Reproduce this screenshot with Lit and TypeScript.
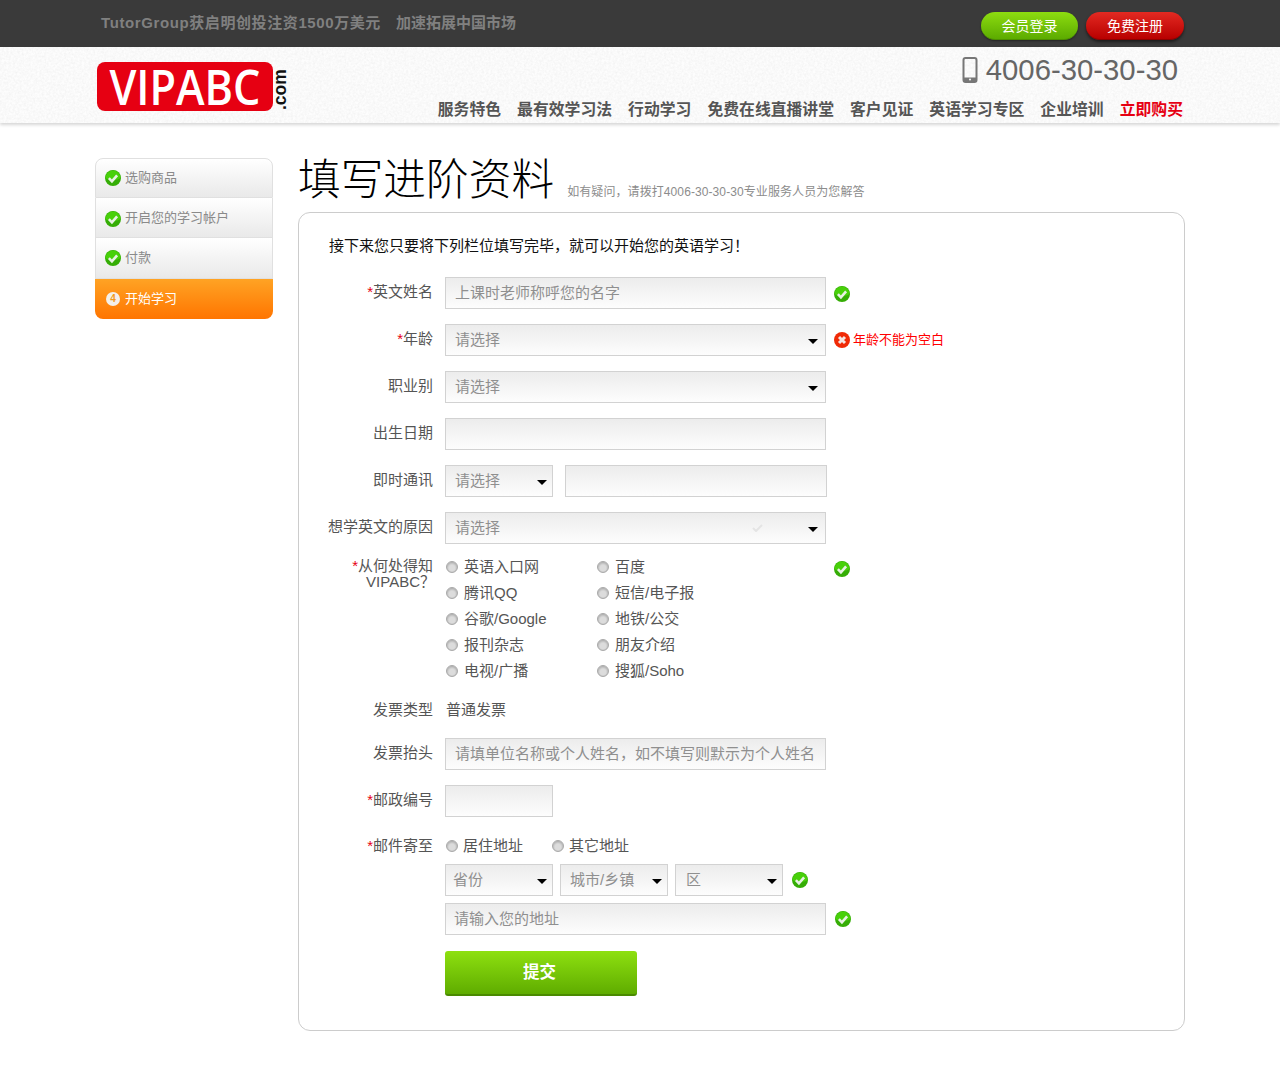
import { LitElement, html, css, svg, unsafeCSS } from "lit";
import { customElement } from "lit/decorators.js";

const FONT = unsafeCSS(`"Liberation Sans", "Noto Sans CJK SC", sans-serif`);
const NOISE = unsafeCSS(
  `url("data:image/svg+xml,%3Csvg xmlns='http://www.w3.org/2000/svg' width='300' height='120'%3E%3Cfilter id='n'%3E%3CfeTurbulence type='fractalNoise' baseFrequency='.45' numOctaves='3' stitchTiles='stitch'/%3E%3CfeColorMatrix values='0 0 0 0 .55 0 0 0 0 .55 0 0 0 0 .55 0 0 0 .28 -.08'/%3E%3C/filter%3E%3Crect width='300' height='120' filter='url(%23n)'/%3E%3C/svg%3E")`
);

const check = () => html`<svg class="ico" viewBox="0 0 16 16" aria-hidden="true">
  <circle cx="8" cy="8" r="8" fill="#35ad06"/>
  <path d="M8 .4a7.6 7.6 0 0 1 7.6 7.6c-3 2.6-12.2 2.6-15.2 0A7.6 7.6 0 0 1 8 .4z" fill="#48d00a"/>
  <path d="M3.9 8.2l3 3.1 5.2-6" fill="none" stroke="#e8f1e4" stroke-width="2.6"/>
</svg>`;

const cross = html`<svg class="ico" viewBox="0 0 16 16" aria-hidden="true">
  <circle cx="8" cy="8" r="8" fill="#f02a06"/>
  <path d="M5 5l6 6M11 5l-6 6" fill="none" stroke="#f5e6e2" stroke-width="3"/>
</svg>`;

const radio = (label: string) => html`<span class="radio"><i class="dot"></i><span>${label}</span></span>`;

@customElement("app-root")
export class AppRoot extends LitElement {
  static styles = css`
    :host { display: block; font-family: ${FONT}; background: #fff; height: 1083px; overflow: hidden; }
    * { box-sizing: border-box; }
    .wrap { width: 1090px; margin-left: 95px; }
    .top { height: 47px; background: #3a3a3a; }
    .top .wrap { display: flex; justify-content: space-between; height: 47px; }
    .news { display: flex; gap: 15px; padding: 14px 0 0 6px; font-size: 15px; line-height: 18px; font-weight: 700; color: #808080; }
    .news span:first-child { letter-spacing: .6px; }
    .btns { display: flex; gap: 8px; padding-top: 12px; margin-right: 1px; }
    .pill { height: 28px; width: 97px; border-radius: 14px; color: #fff; font-size: 14px; line-height: 28px; text-align: center; }
    .pill.g { background: linear-gradient(#8ddc10, #5cab00); border-bottom: 1px solid #4c8f00; box-shadow: 0 1px 2px rgba(0,0,0,.4); }
    .pill.r { width: 98px; background: linear-gradient(#e32a22, #b80000); border-bottom: 1px solid #8e0000; box-shadow: 0 2px 3px rgba(0,0,0,.5); }
    .head { position: relative; height: 76px; background-color: #fdfdfd; background-image: ${NOISE}; box-shadow: 0 2px 3px rgba(0,0,0,.16); }
    .head .wrap { display: flex; justify-content: space-between; height: 76px; }
    .logo { display: flex; align-items: flex-start; padding: 15px 0 0 2px; gap: 1px; }
    .mark { display: flex; justify-content: center; align-items: center; width: 176px; height: 49px; border-radius: 8px; background: #e60012; color: #fff; }
    .mark span { font-family: "Open Sans", sans-serif; font-size: 48px; line-height: 47px; font-weight: 600; transform: scaleX(.9); }
    .com { writing-mode: vertical-rl; transform: rotate(180deg); font-size: 17.5px; line-height: 12px; height: 44px; font-weight: 700; color: #111; text-align: left; margin-top: 4px; }
    .hr { display: flex; flex-direction: column; align-items: flex-end; }
    .phone { display: flex; align-items: center; gap: 7px; height: 44px; padding: 2px 7px 0 0; font-size: 29.3px; color: #666; }
    .phone svg { width: 17px; height: 26px; }
    .nav { display: flex; gap: 16px; margin: 9px 2px 0 0; font-size: 15.83px; line-height: 20px; font-weight: 700; color: #555; }
    .nav .buy { color: #e60012; }

    .body { display: flex; gap: 25px; padding-top: 31px; }
    .side { width: 178px; align-self: flex-start; margin-top: 4px; }
    .step { height: 40px; display: flex; align-items: center; gap: 4px; padding-left: 9px; font-size: 13px; color: #8a8a8a;
      background: linear-gradient(#fff, #e9e9e9); border: 1px solid #e0e0e0; border-top: 0; }
    .step span:last-child { line-height: 16px; margin-bottom: 1px; }
    .step:first-child { border-top: 1px solid #e0e0e0; border-radius: 8px 8px 0 0; }
    .step:nth-child(2) { padding-top: 2px; }
    .step:nth-child(3) { height: 41px; }
    .step.on { background: linear-gradient(#ffa324, #ff7500); color: #fff; border: 0; border-radius: 0 0 8px 8px; padding-left: 10px; }
    .num { width: 14px; height: 14px; border-radius: 50%; background: #f4f0ea; color: #f39a1c; font-size: 10px; line-height: 14px; font-weight: 700; text-align: center; margin: 0 1px; }

    .main { width: 887px; }
    .title { display: flex; align-items: flex-end; gap: 13px; height: 51px; }
    .title h1 { margin: 0; font-size: 42.7px; line-height: 50px; font-weight: 300; color: #000; }
    .title p { margin: 0 0 5px; font-size: 12px; letter-spacing: .09px; line-height: 16px; color: #8c8c8c; }
    .card { margin-top: 7px; height: 819px; border: 1px solid #ccc; border-radius: 12px; padding: 23px 0 0 0; }
    .intro { font-size: 15px; line-height: 20px; color: #111; margin: 0 0 21px 30px; }
    .row { display: flex; align-items: center; height: 32px; margin-bottom: 15px; }
    .lab { width: 134px; margin-right: 12px; flex: none; text-align: right; font-size: 15px; line-height: 16px; color: #555; padding-bottom: 3px; }
    .lab b { color: #e60012; font-weight: 400; }
    .field { position: relative; height: 32px; width: 381px; flex: none; padding-left: 9px; font-size: 15px; line-height: 30px; color: #8f8f8f;
      background: linear-gradient(#ececec, #fdfdfd); border: 1px solid #d2d2d2; white-space: nowrap; overflow: hidden; }
    .field.arrow::after { content: ""; position: absolute; right: 7px; top: 14px; border: 5px solid transparent; border-top: 5px solid #000; border-bottom: 0; }
    .w108 { width: 108px; }
    .field.w108.arrow::after { right: 5px; }
    .w262 { width: 262px; margin-left: 12px; }
    .ico { width: 16px; height: 16px; flex: none; }
    .row > .ico { margin: 2px 0 0 8px; }
    .err { display: flex; align-items: center; gap: 3px; margin-left: 8px; font-size: 13px; color: #f00; }
    .err span { line-height: 16px; margin-bottom: 1px; }
    .faint { position: absolute; left: 306px; top: 11px; width: 11px; height: 8px; }

    .how { display: flex; height: 127px; margin: -1px 0 16px; }
    .how .lab { padding: 0; }
    .how .lab span { display: block; margin-right: -2px; }
    .radios { display: grid; grid-template-columns: 151px 150px; grid-auto-rows: 26px; width: 381px; padding: 0 0 0 1px; flex: none; }
    .radio { display: flex; align-items: center; gap: 6px; font-size: 15px; color: #555; height: 18px; white-space: nowrap; }
    .radio span { line-height: 16px; margin-bottom: 1px; }
    .dot { width: 12px; height: 12px; border-radius: 50%; flex: none; border: 1px solid #a8a8a8; background: radial-gradient(circle at 50% 60%, #dcdcdc 35%, #c8c8c8 60%, #f6f6f6 100%); box-shadow: inset 0 1px 1px #b0b0b0; }
    .how > .ico { margin: 3px 0 0 8px; }
    .plain { height: 18px; margin: 0 0 19px; }
    .plain .lab, .mail .lab { padding: 0; }
    .plain .val { font-size: 15px; line-height: 16px; color: #555; padding-left: 1px; }
    .zip { margin-bottom: 20px; }
    .mail { height: 18px; margin: 0 0 9px; }
    .mail .opts { display: flex; gap: 29px; padding-left: 1px; }
    .mail .radio { gap: 5px; }
    .sub { padding-left: 146px; display: flex; align-items: center; height: 32px; margin-bottom: 7px; }
    .sub .field:nth-child(1) { padding-left: 7px; }
    .sub .field:nth-child(3) { padding-left: 10px; }
    .sub .field + .field { margin-left: 7px; }
    .sub > .ico { margin-left: 9px; }
    .sub.addr .field { padding-left: 8px; }
    .submit { margin: 16px 0 0 146px; width: 192px; height: 45px; border-radius: 3px; color: #fff; font-size: 16.5px; font-weight: 700; line-height: 43px; text-align: center;
      padding-right: 3px; background: linear-gradient(#8ee010, #5fac00); border-bottom: 2px solid #4a8a00; }
  `;

  render() {
    return html`
      <div class="top"><div class="wrap">
        <div class="news"><span>TutorGroup获启明创投注资1500万美元</span><span>加速拓展中国市场</span></div>
        <div class="btns"><div class="pill g">会员登录</div><div class="pill r">免费注册</div></div>
      </div></div>
      <div class="head"><div class="wrap">
        <div class="logo"><div class="mark"><span>VIPABC</span></div><div class="com">.com</div></div>
        <div class="hr">
          <div class="phone">
            <svg viewBox="0 0 17 26" aria-hidden="true">
              <rect x="1.5" y="1" width="13" height="24" rx="2" fill="none" stroke="#777" stroke-width="2"/>
              <rect x="2" y="20.5" width="12" height="4" fill="#777"/>
              <circle cx="8" cy="22.5" r="1.1" fill="#eee"/>
            </svg>
            <span>4006-30-30-30</span>
          </div>
          <div class="nav">
            <span>服务特色</span><span>最有效学习法</span><span>行动学习</span><span>免费在线直播讲堂</span>
            <span>客户见证</span><span>英语学习专区</span><span>企业培训</span><span class="buy">立即购买</span>
          </div>
        </div>
      </div></div>

      <div class="wrap body">
        <div class="side">
          <div class="step">${check()}<span>选购商品</span></div>
          <div class="step">${check()}<span>开启您的学习帐户</span></div>
          <div class="step">${check()}<span>付款</span></div>
          <div class="step on"><span class="num">4</span><span>开始学习</span></div>
        </div>
        <div class="main">
          <div class="title"><h1>填写进阶资料</h1><p>如有疑问，请拨打4006-30-30-30专业服务人员为您解答</p></div>
          <div class="card">
            <p class="intro">接下来您只要将下列栏位填写完毕，就可以开始您的英语学习！</p>
            <div class="row"><div class="lab"><b>*</b>英文姓名</div><div class="field">上课时老师称呼您的名字</div>${check()}</div>
            <div class="row"><div class="lab"><b>*</b>年龄</div><div class="field arrow">请选择</div><div class="err">${cross}<span>年龄不能为空白</span></div></div>
            <div class="row"><div class="lab">职业别</div><div class="field arrow">请选择</div></div>
            <div class="row"><div class="lab">出生日期</div><div class="field"></div></div>
            <div class="row"><div class="lab">即时通讯</div><div class="field arrow w108">请选择</div><div class="field w262"></div></div>
            <div class="row"><div class="lab">想学英文的原因</div><div class="field arrow">请选择
              <svg class="faint" viewBox="0 0 11 8" aria-hidden="true">${svg`<path d="M1 4l3 3 6-6" fill="none" stroke="#e4e4e4" stroke-width="2"/>`}</svg>
            </div></div>
            <div class="how">
              <div class="lab"><b>*</b>从何处得知<span>VIPABC？</span></div>
              <div class="radios">
                ${radio("英语入口网")}${radio("百度")}
                ${radio("腾讯QQ")}${radio("短信/电子报")}
                ${radio("谷歌/Google")}${radio("地铁/公交")}
                ${radio("报刊杂志")}${radio("朋友介绍")}
                ${radio("电视/广播")}${radio("搜狐/Soho")}
              </div>
              ${check()}
            </div>
            <div class="row plain"><div class="lab">发票类型</div><div class="val">普通发票</div></div>
            <div class="row"><div class="lab">发票抬头</div><div class="field">请填单位名称或个人姓名，如不填写则默示为个人姓名</div></div>
            <div class="row zip"><div class="lab"><b>*</b>邮政编号</div><div class="field w108"></div></div>
            <div class="row mail"><div class="lab"><b>*</b>邮件寄至</div><div class="opts">${radio("居住地址")}${radio("其它地址")}</div></div>
            <div class="sub">
              <div class="field arrow w108">省份</div><div class="field arrow w108">城市/乡镇</div><div class="field arrow w108">区</div>${check()}
            </div>
            <div class="sub addr"><div class="field">请输入您的地址</div>${check()}</div>
            <div class="submit">提交</div>
          </div>
        </div>
      </div>
    `;
  }
}
